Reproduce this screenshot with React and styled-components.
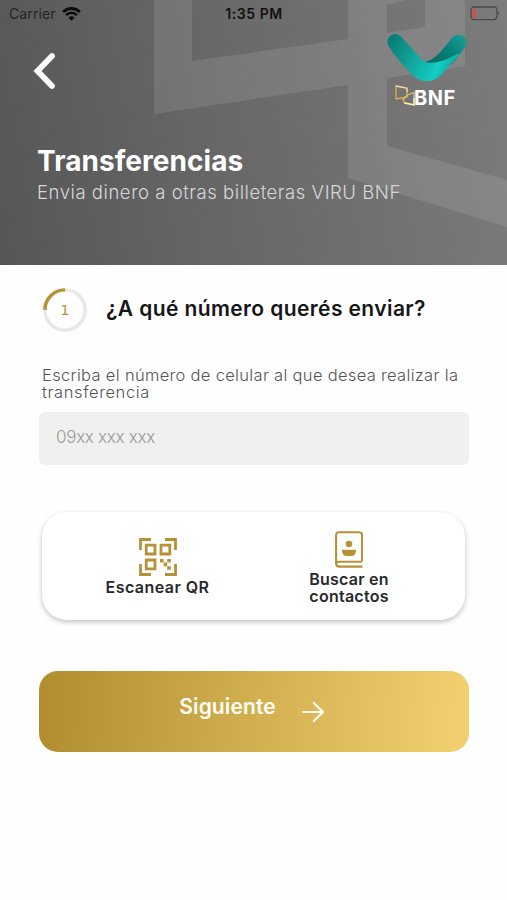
import React from "react";
import styled, { createGlobalStyle } from "styled-components";

export default function App() {
	return (
		<>
			<GlobalStyle />
			<Screen>
				<Header>
					<HeaderPattern />
					<StatusBar>
						<Carrier>
							Carrier <WifiIcon />
						</Carrier>
						<Clock>1:35 PM</Clock>
						<BatteryIcon />
					</StatusBar>
					<NavRow>
						<BackButton aria-label="Volver">
							<BackIcon />
						</BackButton>
						<Brand>
							<ViruIcon />
							<BrandName>
								<BnfIcon />
								BNF
							</BrandName>
						</Brand>
					</NavRow>
					<Title>Transferencias</Title>
					<Subtitle>Envia dinero a otras billeteras VIRU BNF</Subtitle>
				</Header>
				<Content>
					<StepRow>
						<StepIndicator>
							<StepRing />
							<StepNumber>1</StepNumber>
						</StepIndicator>
						<StepTitle>¿A qué número querés enviar?</StepTitle>
					</StepRow>
					<FieldLabel htmlFor="phone">
						<LabelLine $spacing="0.32px">
							Escriba el número de celular al que desea realizar la
						</LabelLine>
						<LabelLine $spacing="0.6px">transferencia</LabelLine>
					</FieldLabel>
					<PhoneInput id="phone" placeholder="09xx xxx xxx" />
					<OptionsCard>
						<Option $top="26px">
							<QrIcon />
							<OptionText $spacing="0.45px">Escanear QR</OptionText>
						</Option>
						<Option $top="19px">
							<ContactsIcon />
							<OptionText $spacing="0.25px">
								Buscar en
								<br />
								contactos
							</OptionText>
						</Option>
					</OptionsCard>
					<NextButton>
						<NextText>Siguiente</NextText>
						<ArrowIcon />
					</NextButton>
				</Content>
			</Screen>
		</>
	);
}

function HeaderPattern() {
	return (
		<PatternSvg viewBox="0 0 507 265">
			<path
				fill="#fff"
				fillOpacity="0.1"
				d="M154 0H192V61L348 39V0H405L387 5V33L425 27V0H465V66L387 78V146L507 180V227L348 178V85L154 114Z"
			/>
		</PatternSvg>
	);
}

function WifiIcon() {
	return (
		<svg width="19" height="14" viewBox="0 0 19 14" fill="none" stroke="#0b0b0b">
			<path d="M1.2 5A11.6 11.6 0 0 1 17.8 5" strokeWidth="2.8" />
			<path d="M4.1 8.1A7.5 7.5 0 0 1 14.9 8.1" strokeWidth="2.4" />
			<path d="M9.5 13.8L6.5 10.8A4.3 4.3 0 0 1 12.5 10.8Z" fill="#0b0b0b" stroke="none" />
		</svg>
	);
}

function BatteryIcon() {
	return (
		<svg width="31" height="15" viewBox="0 0 31 15">
			<rect x="1" y="1" width="25.8" height="12.6" rx="3" fill="none" stroke="#4b4b4b" strokeWidth="1.3" />
			<rect x="2.8" y="3" width="2.8" height="8.7" rx="1" fill="#e8443d" />
			<path d="M28.2 5.2Q30.4 7.3 28.2 9.4Z" fill="#4b4b4b" />
		</svg>
	);
}

function BackIcon() {
	return (
		<svg width="24" height="38" viewBox="0 0 24 38">
			<path d="M20 4L5.5 19L20 34" fill="none" stroke="#fff" strokeWidth="5.8" strokeLinecap="round" />
		</svg>
	);
}

function ViruIcon() {
	return (
		<svg width="80" height="48" viewBox="0 0 80 48">
			<defs>
				<linearGradient id="viruLeft" x1="5" y1="5" x2="62" y2="32" gradientUnits="userSpaceOnUse">
					<stop offset="0" stopColor="#087f78" />
					<stop offset="0.45" stopColor="#12a69c" />
					<stop offset="0.85" stopColor="#13cdc3" />
					<stop offset="1" stopColor="#12b4aa" />
				</linearGradient>
				<linearGradient id="viruRight" x1="75" y1="5" x2="46" y2="28" gradientUnits="userSpaceOnUse">
					<stop offset="0" stopColor="#16998f" />
					<stop offset="0.4" stopColor="#07857c" />
					<stop offset="1" stopColor="#086d67" />
				</linearGradient>
			</defs>
			<path
				fill="url(#viruRight)"
				d="M38 28C49 25 54 17 60 10L66 3C73-3 83 4 79 11.5C75 18 70 24 64 31L46 34Z"
			/>
			<path
				fill="url(#viruLeft)"
				d="M1.5 12C-2.8 4 7-4 14 2.5L29 19C33 24 36 28 42 28.7C51 29 60 26 69 20.5C71 19.5 72 19.5 73 20L55 40C46 49.5 34 49.5 25 40.5C16 32 8 22 1.5 12Z"
			/>
		</svg>
	);
}

function BnfIcon() {
	return (
		<svg width="20" height="21" viewBox="0 0 20 21" fill="none" strokeWidth="1.3">
			<path d="M1 1L12 3.2V12L1 14Z" stroke="#e1ae50" />
			<path d="M1 1L12 3.2V7" stroke="#f1d89c" />
			<path d="M19 7.5L12.5 10L8 14.5L9.5 18L19 20Z" stroke="#e6bf63" />
			<path d="M9.5 18L19 20V13" stroke="#fff0a9" />
		</svg>
	);
}

function StepRing() {
	return (
		<RingSvg viewBox="0 0 44 44" fill="none" strokeWidth="3.4">
			<circle cx="22" cy="22" r="20.1" stroke="#e8e8e8" />
			<path d="M1.9 22A20.1 20.1 0 0 1 22 1.9" stroke="#b69335" />
		</RingSvg>
	);
}

function QrIcon() {
	return (
		<svg width="38" height="38" viewBox="0 0 38 38" fill="none" stroke="#b59237">
			<path
				strokeWidth="2.8"
				d="M1.5 12V1.5H12M26 1.5H36.5V12M1.5 26V36.5H12M26 36.5H36.5V26M7.2 7.2H16V16H7.2ZM22 7.2H30.8V16H22ZM7.2 22H16V30.8H7.2Z"
			/>
			<path
				fill="#b59237"
				stroke="none"
				d="M21 21H24.6V24.6H21ZM28.2 21H31.8V24.6H28.2ZM24.6 24.6H28.2V28.2H24.6ZM28.2 28.2H31.8V31.8H28.2Z"
			/>
		</svg>
	);
}

function ContactsIcon() {
	return (
		<svg width="28" height="37" viewBox="0 0 28 37" fill="none" stroke="#b59237" strokeWidth="2.1">
			<path d="M27 30.3V4Q27 1.2 24 1.2H4Q1.1 1.2 1.1 4V32.5Q1.1 35.6 4.2 35.6H27.5" />
			<path d="M1.1 33Q1.1 30.8 3.5 30.8H27" />
			<circle cx="14" cy="13" r="3.3" fill="#b59237" stroke="none" />
			<path d="M7 18.7H21V20Q20.5 25 16.5 25H11.5Q7.5 25 7 20Z" fill="#b59237" stroke="none" />
		</svg>
	);
}

function ArrowIcon() {
	return (
		<ArrowSvg width="24" height="22" viewBox="0 0 24 22">
			<path
				d="M2 11H22M12.8 2L22 11L12.8 20"
				fill="none"
				stroke="#fffdf4"
				strokeWidth="2.2"
				strokeLinecap="round"
				strokeLinejoin="round"
			/>
		</ArrowSvg>
	);
}

const GlobalStyle = createGlobalStyle`
	* {
		box-sizing: border-box;
	}

	body {
		margin: 0;
		background: #fefefe;
		font-family: "Inter", sans-serif;
	}
`;

const Screen = styled.main`
	width: 507px;
	height: 900px;
	overflow: hidden;
	background: #fefefe;
`;

const Header = styled.header`
	position: relative;
	isolation: isolate;
	height: 265px;
	background: linear-gradient(80deg, #565656 0%, #686868 45%, #7c7c7c 100%);
`;

const PatternSvg = styled.svg`
	position: absolute;
	inset: 0;
	z-index: -1;
`;

const StatusBar = styled.div`
	display: grid;
	grid-template-columns: 1fr auto 1fr;
	align-items: center;
	height: 28px;
	padding: 0 6px 1px 9px;
	color: #111;

	> :last-child {
		justify-self: end;
	}
`;

const Carrier = styled.div`
	display: flex;
	align-items: center;
	gap: 6px;
	font-size: 14px;
	letter-spacing: 0.1px;
	color: #242424;
`;

const Clock = styled.div`
	margin-right: 2px;
	font-size: 14px;
	font-weight: 600;
	letter-spacing: 0.55px;
`;

const NavRow = styled.div`
	display: flex;
	justify-content: space-between;
	align-items: flex-start;
	height: 115px;
	padding: 6px 40px 0 32px;
`;

const BackButton = styled.button`
	display: flex;
	margin-top: 18px;
	padding: 0;
	border: 0;
	background: none;
`;

const Brand = styled.div`
	display: flex;
	flex-direction: column;
	width: 80px;
`;

const BrandName = styled.div`
	display: flex;
	align-items: flex-end;
	height: 25px;
	padding-left: 8px;
	color: #fff;
	font-size: 20px;
	font-weight: 700;
	line-height: 18px;
	letter-spacing: 0.5px;

	svg {
		flex: none;
		margin: 0 -1px 1px 0;
	}
`;

const Title = styled.h1`
	margin: 0 0 0 37px;
	color: #fff;
	font-size: 28px;
	font-weight: 700;
	line-height: 36px;
	letter-spacing: 0.05px;
`;

const Subtitle = styled.p`
	margin: 1px 0 0 37px;
	color: #d8d8d8;
	font-size: 18.5px;
	font-weight: 300;
	line-height: 24px;
	letter-spacing: 0.55px;
	white-space: nowrap;
`;

const Content = styled.section`
	padding: 23px 38px 0 39px;
`;

const StepRow = styled.div`
	display: flex;
	align-items: center;
	padding-left: 4px;
`;

const StepIndicator = styled.div`
	display: grid;
	place-items: center;
	width: 44px;
	height: 44px;

	> * {
		grid-area: 1 / 1;
	}
`;

const RingSvg = styled.svg`
	width: 44px;
	height: 44px;
`;

const StepNumber = styled.span`
	color: #b69335;
	font-family: "DejaVu Sans", sans-serif;
	font-size: 14px;
`;

const StepTitle = styled.h2`
	margin: 0 0 3px 19px;
	color: #161616;
	font-size: 21px;
	font-weight: 600;
	line-height: 28px;
	letter-spacing: 0.4px;
	white-space: nowrap;
`;

const FieldLabel = styled.label`
	display: flex;
	flex-direction: column;
	margin: 35px 0 0 3px;
	color: #555;
	font-size: 16.5px;
	font-weight: 300;
	line-height: 17px;
`;

const LabelLine = styled.span`
	letter-spacing: ${({ $spacing }) => $spacing};
	white-space: nowrap;
`;

const PhoneInput = styled.input`
	display: block;
	width: 100%;
	height: 53px;
	margin-top: 11px;
	padding: 0 17px 3px;
	border: 0;
	border-radius: 6px;
	background: #f0f0f0;
	font-family: inherit;
	font-size: 17px;
	font-weight: 300;
	letter-spacing: -0.3px;

	&::placeholder {
		color: #999;
		opacity: 1;
	}
`;

const OptionsCard = styled.div`
	display: grid;
	grid-template-columns: 231px 152px;
	height: 108px;
	margin: 47px 4px 0 3px;
	border-radius: 25px;
	background: #fff;
	box-shadow: 0 2px 5px rgba(0, 0, 0, 0.24);
`;

const Option = styled.div`
	display: flex;
	flex-direction: column;
	align-items: center;
	padding-top: ${({ $top }) => $top};
`;

const OptionText = styled.span`
	margin-top: 3px;
	color: #292929;
	font-size: 16px;
	font-weight: 600;
	line-height: 17px;
	letter-spacing: ${({ $spacing }) => $spacing};
	text-align: center;
	white-space: nowrap;
`;

const NextButton = styled.button`
	display: flex;
	justify-content: center;
	align-items: center;
	width: 100%;
	height: 81px;
	margin-top: 51px;
	padding: 0 4px 0 0;
	border: 0;
	border-radius: 19px;
	background: linear-gradient(94deg, #b18f31 2%, #f2d06f 98%);
	color: #fffdf4;
	font-family: inherit;
`;

const NextText = styled.span`
	margin-bottom: 10px;
	font-size: 21px;
	font-weight: 600;
	line-height: 28px;
	letter-spacing: 0.1px;
`;

const ArrowSvg = styled.svg`
	margin-left: 25px;
`;
